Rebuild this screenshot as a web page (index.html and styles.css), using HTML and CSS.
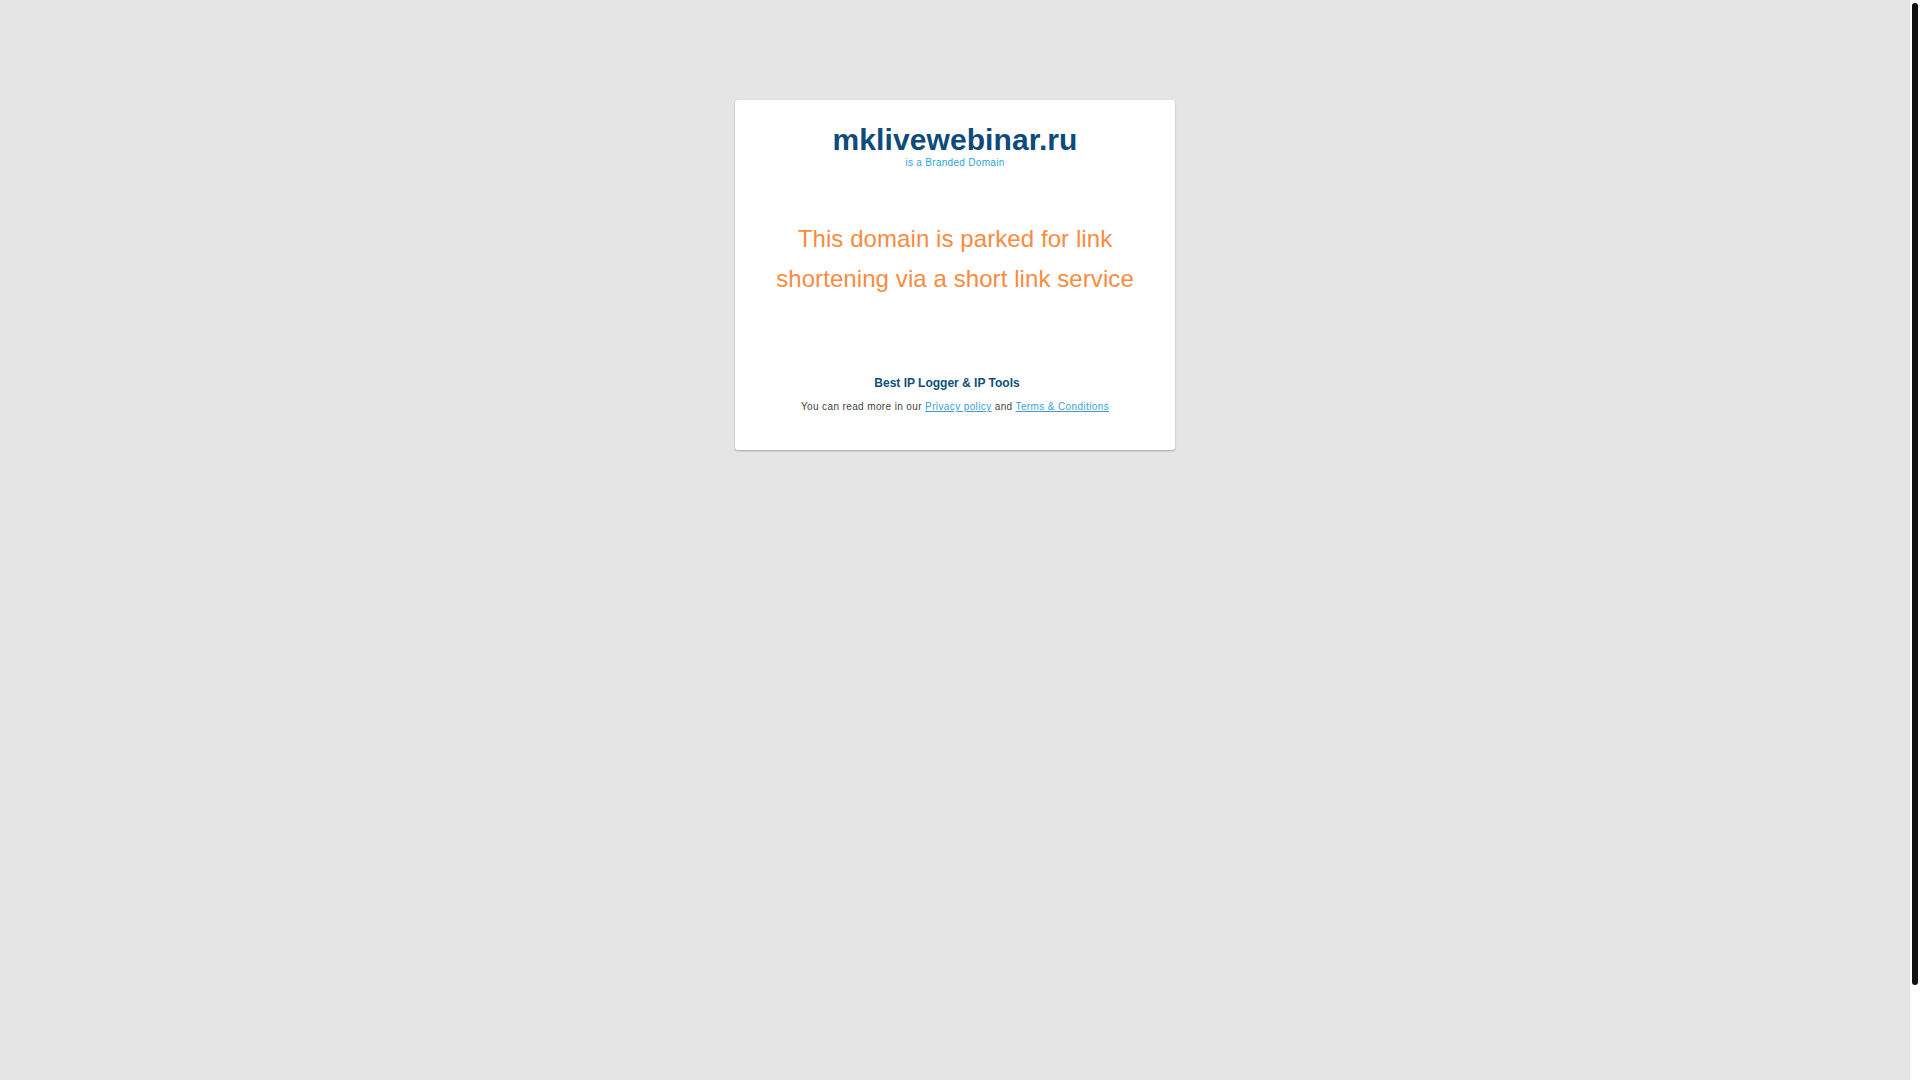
FILE: index.html
```html
<!DOCTYPE html>
<html lang="en">
<head>
<meta charset="utf-8">
<title>mklivewebinar.ru</title>
<link rel="stylesheet" href="styles.css">
</head>
<body>
<div class="viewport">
  <div class="page">
    <div class="card">
      <h1 class="domain">mklivewebinar.ru</h1>
      <div class="tagline">is a Branded Domain</div>
      <p class="parked">This domain is parked for link shortening via a short link service</p>
      <div class="brand">Best IP Logger &amp; IP Tools</div>
      <p class="legal">You can read more in our <a href="#">Privacy policy</a> and <a href="#">Terms &amp; Conditions</a></p>
    </div>
  </div>
  <div class="scrollbar"><div class="thumb"></div></div>
</div>
</body>
</html>
```
FILE: styles.css
```css
html, body {
  margin: 0;
  padding: 0;
  height: 100%;
  overflow: hidden;
  background: #e5e5e5;
  font-family: "Liberation Sans", Arial, sans-serif;
}
.viewport {
  display: flex;
  height: 100%;
}
.page {
  flex: 1;
  padding-top: 100px;
  box-sizing: border-box;
}
.scrollbar {
  width: 10px;
  background: #ffffff;
  padding: 3px 2px 95px;
  box-sizing: border-box;
  display: flex;
}
.thumb {
  flex: 1;
  background: #111111;
  border-radius: 3px;
}
.card {
  width: 440px;
  margin: 0 auto;
  background: #ffffff;
  border-radius: 3px;
  box-shadow: 0 1px 2px rgba(0, 0, 0, 0.28);
  padding: 24px 30px 36px;
  box-sizing: border-box;
  text-align: center;
}
.domain {
  margin: 0;
  font-size: 30px;
  line-height: 32px;
  font-weight: bold;
  letter-spacing: 0.1px;
  color: #0c4b7a;
}
.tagline {
  margin-top: 2px;
  font-size: 10px;
  line-height: 10px;
  letter-spacing: 0.3px;
  color: #27a7de;
}
.parked {
  margin: 51px 0 0;
  font-size: 24px;
  line-height: 40px;
  letter-spacing: 0.08px;
  color: #f88c3e;
}
.brand {
  margin-top: 76px;
  padding-right: 16px;
  font-size: 12px;
  line-height: 16px;
  font-weight: bold;
  color: #0f4e7e;
}
.legal {
  margin: 9px 0 0;
  font-size: 10px;
  line-height: 14px;
  letter-spacing: 0.38px;
  color: #444444;
}
.legal a {
  color: #3a9fd2;
  text-decoration: underline;
}
```
